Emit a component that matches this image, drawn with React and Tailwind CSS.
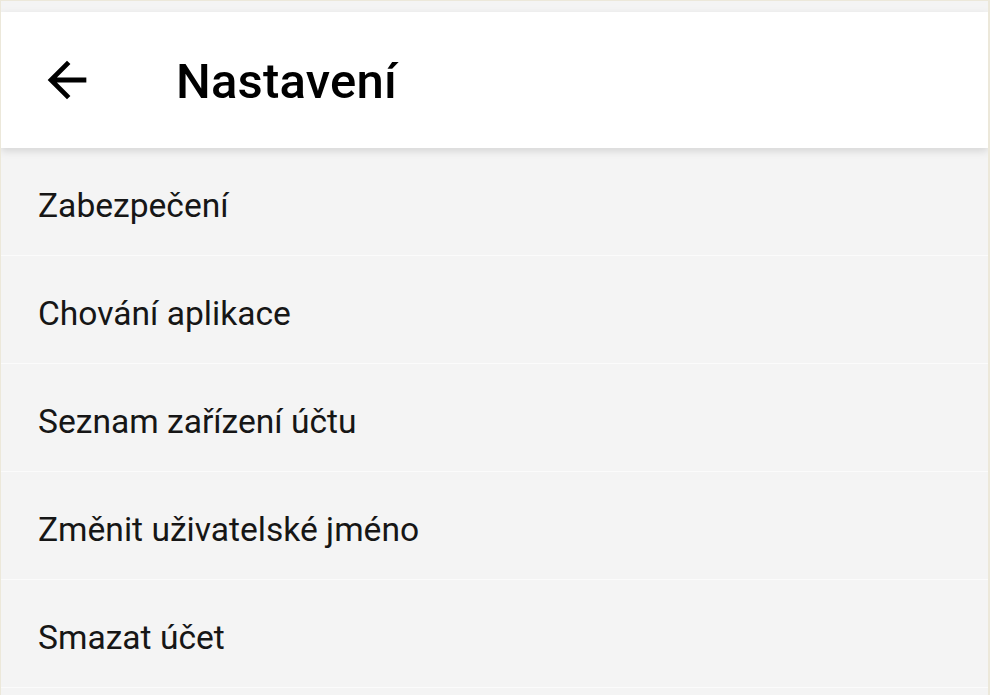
export default function App() {

  const items = [
    "Zabezpečení",
    "Chování aplikace",
    "Seznam zařízení účtu",
    "Změnit uživatelské jméno",
    "Smazat účet"
  ];

  return (

    <div
      className="h-[695px] w-[990px] overflow-hidden bg-[#f4f4f4] border-l border-t border-r-2 border-[#ece8da] pt-[11px]"
      style={{ fontFamily: "Roboto, 'Noto Sans', sans-serif" }}
    >

      {/* Toolbar */}

      <div className="relative z-10 h-[136px] bg-white flex items-center shadow-[0_3px_8px_rgba(0,0,0,0.13)]">

        <button className="w-[134px] h-full flex items-center pl-[38px]">
          <svg viewBox="0 0 24 24" className="w-[58px] h-[58px] -ml-[1px]">
            <path
              d="M20 11H7.83l5.59-5.59L12 4l-8 8 8 8 1.41-1.41L7.83 13H20v-2z"
              fill="#000"
            />
          </svg>
        </button>

        <h1 className="text-[49px] font-medium text-black leading-none ml-[41px] mt-[2px] tracking-[0.2px]">
          Nastavení
        </h1>

      </div>

      {/* Settings list */}

      <div className="flex flex-col">

        {items.map((item) => (

          <div
            key={item}
            className="h-[108px] shrink-0 flex items-center border-b border-[#fbfbfb] pl-[37px] pt-[9px]"
          >
            <span className="text-[33.6px] text-[#161616] leading-none">
              {item}
            </span>
          </div>

        ))}

      </div>

    </div>

  );

}
